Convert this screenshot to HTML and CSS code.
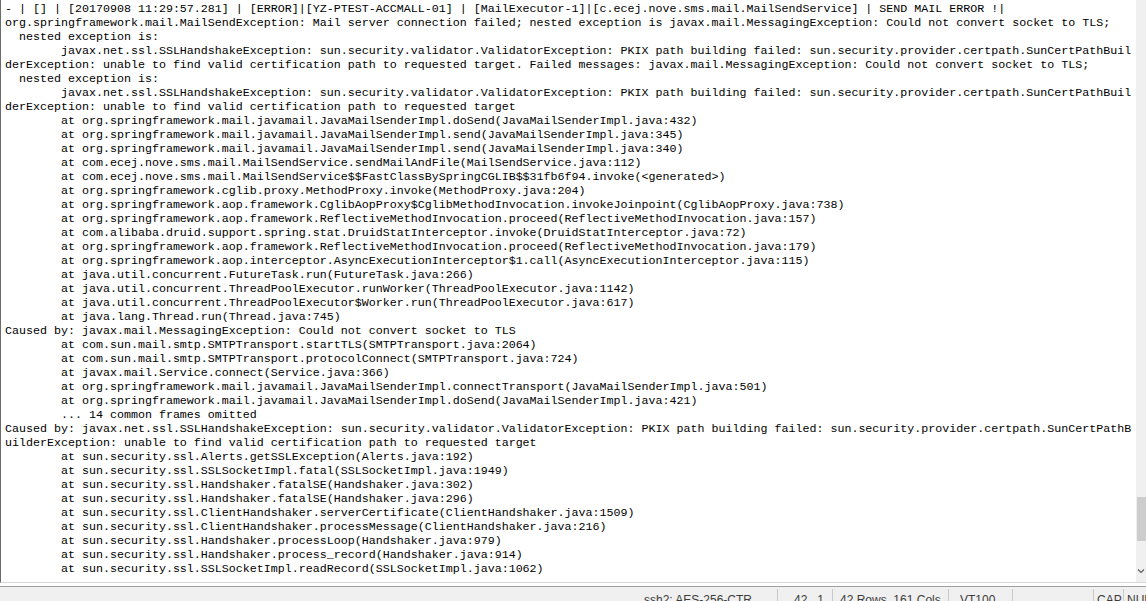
FILE: index.html
```html
<!DOCTYPE html>
<html>
<head>
    <meta name="viewport" content="width=device-width, initial-scale=1">
    <link rel="stylesheet" href="styles.css">
</head>
<body>
    <div class="window">
        <div class="term">
            <pre class="screen">- | [] | [20170908 11:29:57.281] | [ERROR]|[YZ-PTEST-ACCMALL-01] | [MailExecutor-1]|[c.ecej.nove.sms.mail.MailSendService] | SEND MAIL ERROR !|
org.springframework.mail.MailSendException: Mail server connection failed; nested exception is javax.mail.MessagingException: Could not convert socket to TLS;
  nested exception is:
        javax.net.ssl.SSLHandshakeException: sun.security.validator.ValidatorException: PKIX path building failed: sun.security.provider.certpath.SunCertPathBuil
derException: unable to find valid certification path to requested target. Failed messages: javax.mail.MessagingException: Could not convert socket to TLS;
  nested exception is:
        javax.net.ssl.SSLHandshakeException: sun.security.validator.ValidatorException: PKIX path building failed: sun.security.provider.certpath.SunCertPathBuil
derException: unable to find valid certification path to requested target
        at org.springframework.mail.javamail.JavaMailSenderImpl.doSend(JavaMailSenderImpl.java:432)
        at org.springframework.mail.javamail.JavaMailSenderImpl.send(JavaMailSenderImpl.java:345)
        at org.springframework.mail.javamail.JavaMailSenderImpl.send(JavaMailSenderImpl.java:340)
        at com.ecej.nove.sms.mail.MailSendService.sendMailAndFile(MailSendService.java:112)
        at com.ecej.nove.sms.mail.MailSendService$$FastClassBySpringCGLIB$$31fb6f94.invoke(&lt;generated&gt;)
        at org.springframework.cglib.proxy.MethodProxy.invoke(MethodProxy.java:204)
        at org.springframework.aop.framework.CglibAopProxy$CglibMethodInvocation.invokeJoinpoint(CglibAopProxy.java:738)
        at org.springframework.aop.framework.ReflectiveMethodInvocation.proceed(ReflectiveMethodInvocation.java:157)
        at com.alibaba.druid.support.spring.stat.DruidStatInterceptor.invoke(DruidStatInterceptor.java:72)
        at org.springframework.aop.framework.ReflectiveMethodInvocation.proceed(ReflectiveMethodInvocation.java:179)
        at org.springframework.aop.interceptor.AsyncExecutionInterceptor$1.call(AsyncExecutionInterceptor.java:115)
        at java.util.concurrent.FutureTask.run(FutureTask.java:266)
        at java.util.concurrent.ThreadPoolExecutor.runWorker(ThreadPoolExecutor.java:1142)
        at java.util.concurrent.ThreadPoolExecutor$Worker.run(ThreadPoolExecutor.java:617)
        at java.lang.Thread.run(Thread.java:745)
Caused by: javax.mail.MessagingException: Could not convert socket to TLS
        at com.sun.mail.smtp.SMTPTransport.startTLS(SMTPTransport.java:2064)
        at com.sun.mail.smtp.SMTPTransport.protocolConnect(SMTPTransport.java:724)
        at javax.mail.Service.connect(Service.java:366)
        at org.springframework.mail.javamail.JavaMailSenderImpl.connectTransport(JavaMailSenderImpl.java:501)
        at org.springframework.mail.javamail.JavaMailSenderImpl.doSend(JavaMailSenderImpl.java:421)
        ... 14 common frames omitted
Caused by: javax.net.ssl.SSLHandshakeException: sun.security.validator.ValidatorException: PKIX path building failed: sun.security.provider.certpath.SunCertPathB
uilderException: unable to find valid certification path to requested target
        at sun.security.ssl.Alerts.getSSLException(Alerts.java:192)
        at sun.security.ssl.SSLSocketImpl.fatal(SSLSocketImpl.java:1949)
        at sun.security.ssl.Handshaker.fatalSE(Handshaker.java:302)
        at sun.security.ssl.Handshaker.fatalSE(Handshaker.java:296)
        at sun.security.ssl.ClientHandshaker.serverCertificate(ClientHandshaker.java:1509)
        at sun.security.ssl.ClientHandshaker.processMessage(ClientHandshaker.java:216)
        at sun.security.ssl.Handshaker.processLoop(Handshaker.java:979)
        at sun.security.ssl.Handshaker.process_record(Handshaker.java:914)
        at sun.security.ssl.SSLSocketImpl.readRecord(SSLSocketImpl.java:1062)</pre>
            <div class="scrollbar">
                <div class="track">
                    <div class="thumb"></div>
                </div>
                <svg class="arrow" width="8" height="6" viewBox="0 0 8 6">
                    <path d="M1 1.5 L4 4.5 L7 1.5" fill="none" stroke="#606060" stroke-width="1.2"/>
                </svg>
            </div>
        </div>
        <div class="gap"></div>
        <div class="status">
            <span class="cell cell-grow">ssh2: AES-256-CTR</span>
            <span class="cell cell-pos">42,&nbsp;&nbsp;1</span>
            <span class="cell cell-size">42 Rows, 161 Cols</span>
            <span class="cell cell-term">VT100</span>
            <span class="cell cell-empty"></span>
            <span class="cell cell-cap">CAP</span>
            <span class="cell cell-num">NUM</span>
        </div>
    </div>
</body>
</html>
```

FILE: styles.css
```css
html, body {
    margin: 0;
    padding: 0;
    overflow: hidden;
}

body {
    background-color: #f0f0f0;
    width: 1146px;
    height: 601px;
}

.window {
    display: flex;
    flex-direction: column;
    height: 601px;
}

.term {
    display: flex;
    height: 584px;
    background-color: white;
    border-left: 1px solid #6b6b6b;
    border-bottom: 1px solid #d8d8d8;
}

.screen {
    flex: 1;
    margin: 0;
    padding: 2px 0 0 4px;
    font-family: "Liberation Mono", monospace;
    font-size: 11.667px;
    line-height: 14px;
    color: #000;
    white-space: pre;
    overflow: hidden;
}

.scrollbar {
    width: 10px;
    background-color: #f0f0f0;
    display: flex;
    flex-direction: column;
    align-items: flex-end;
}

.track {
    flex: 1;
    width: 9px;
    padding-top: 497px;
}

.thumb {
    height: 44px;
    background-color: #cdcdcd;
}

.arrow {
    margin: 0 0 8px 0;
    align-self: center;
}

.gap {
    height: 3px;
    background-color: white;
    border-bottom: 1px solid #a0a0a0;
}

.status {
    display: flex;
    height: 12px;
    padding-top: 2px;
    font-family: "Liberation Sans", Arial, sans-serif;
    font-size: 12px;
    color: #3c3c3c;
    background-color: #f0f0f0;
    overflow: hidden;
}

.cell {
    border-left: 1px solid #c9c9c9;
    padding-top: 4px;
    line-height: 14px;
    white-space: nowrap;
    box-sizing: border-box;
}

.cell-grow {
    flex: 1;
    border-left: none;
    text-align: right;
    padding-right: 25px;
}

.cell-pos {
    width: 55px;
    padding-left: 16px;
}

.cell-size {
    width: 116px;
    padding-left: 7px;
}

.cell-term {
    width: 64px;
    padding-left: 11px;
}

.cell-empty {
    width: 81px;
}

.cell-cap {
    width: 30px;
    padding-left: 3px;
}

.cell-num {
    width: 23px;
    padding-left: 3px;
}
```
